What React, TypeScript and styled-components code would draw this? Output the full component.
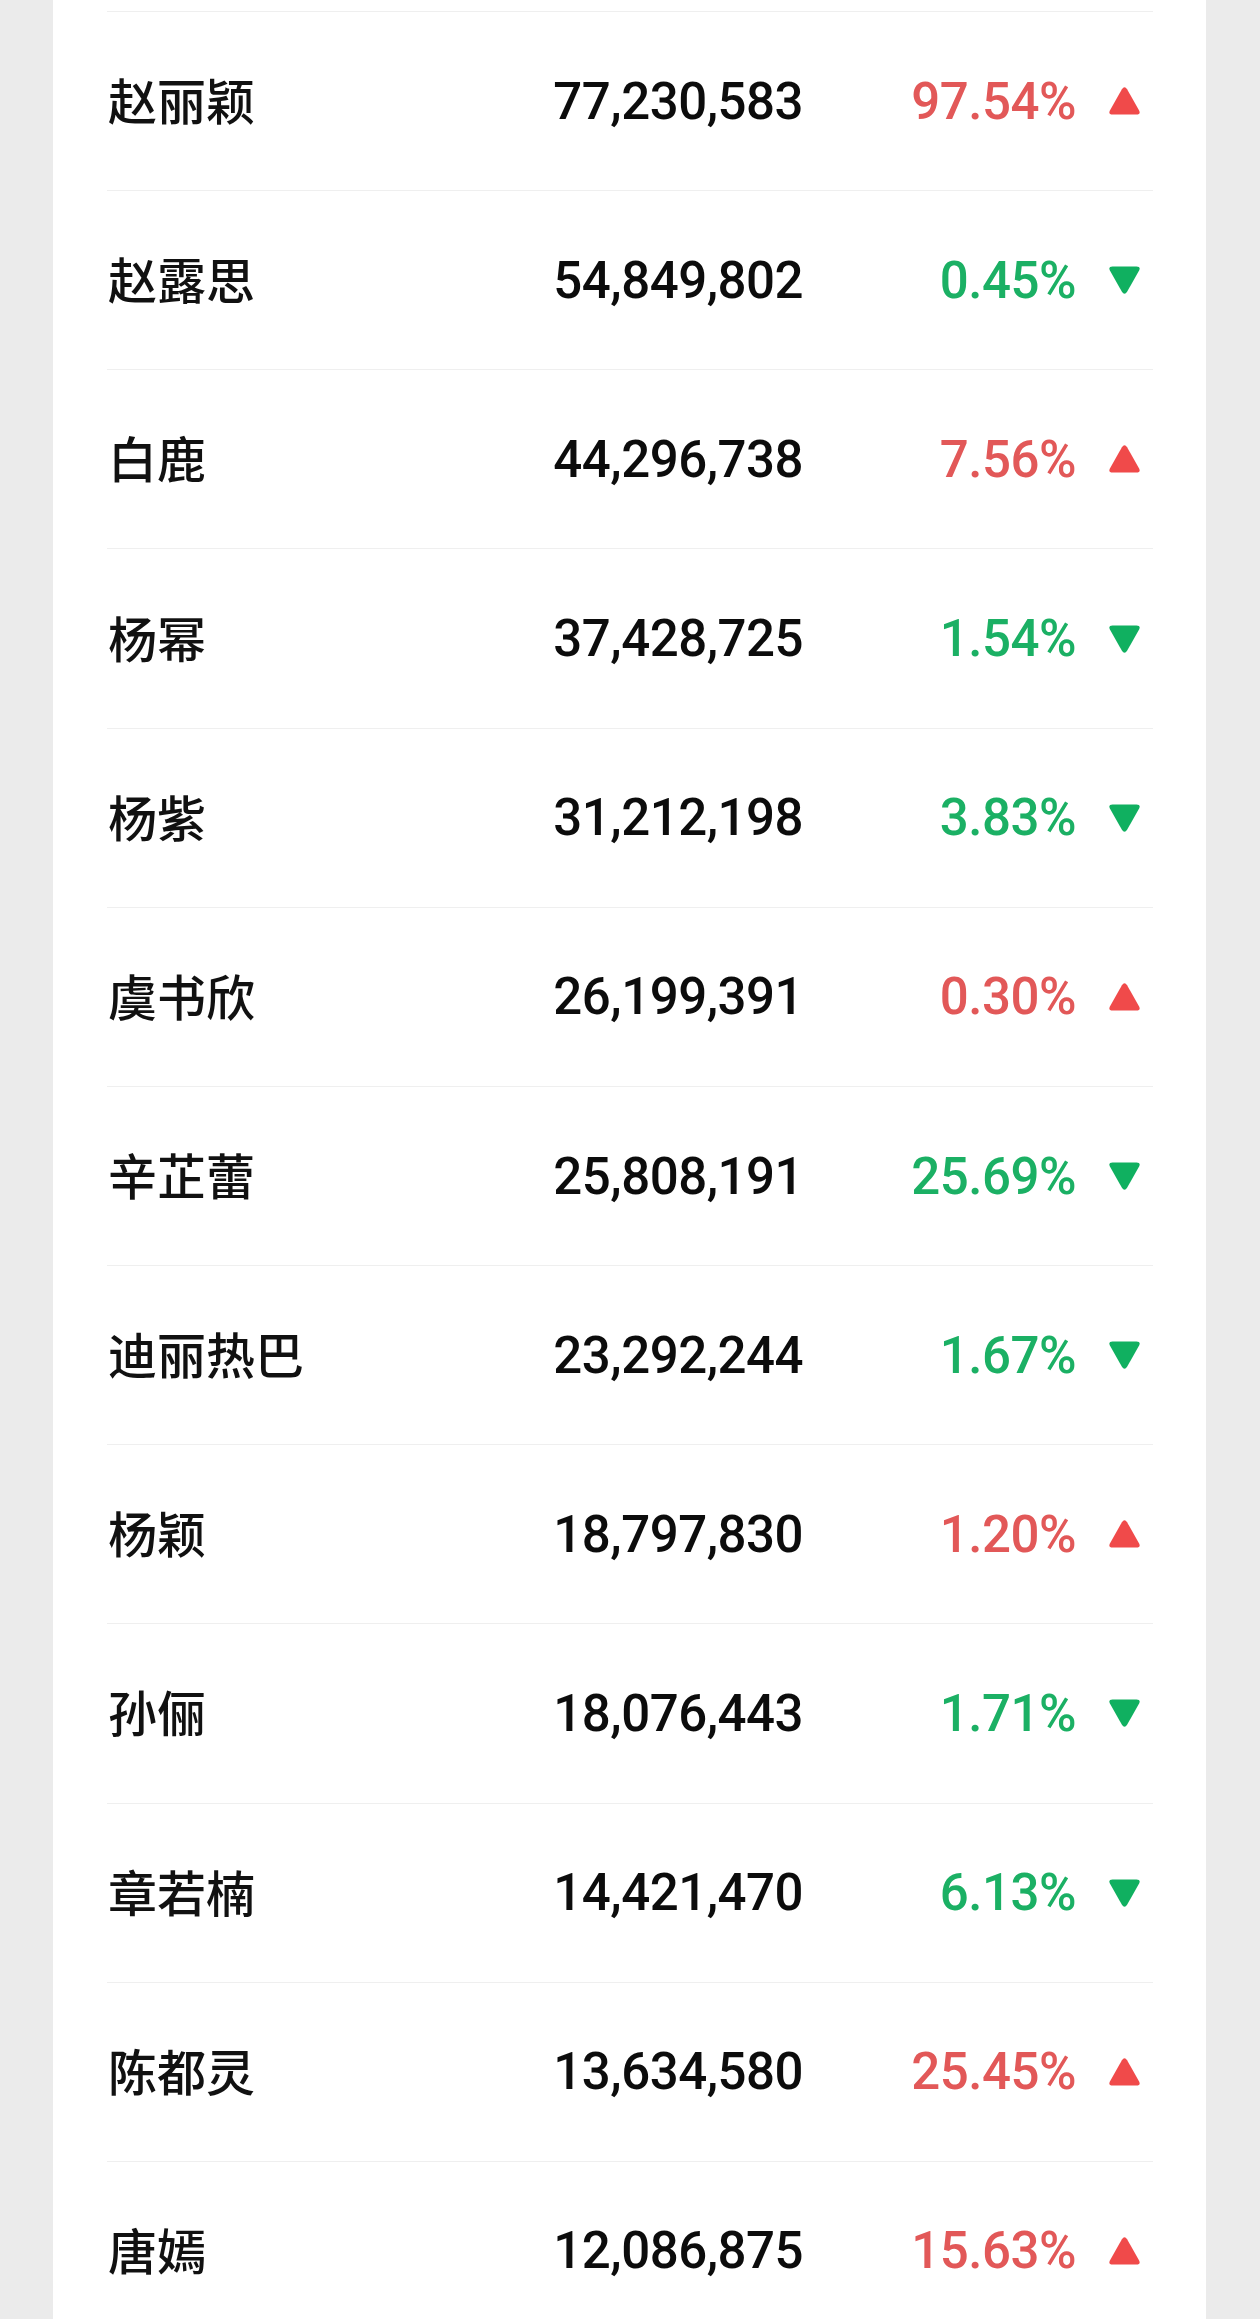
import React from "react";
import styled, { createGlobalStyle } from "styled-components";

const GlobalStyle = createGlobalStyle`
  html, body {
    margin: 0;
    padding: 0;
    background: #ebebeb;
  }
  body {
    font-family: Roboto, "Noto Sans CJK SC", sans-serif;
    color: #111;
  }
`;

const Page = styled.div`
  width: 1260px;
  height: 2319px;
  overflow: hidden;
  background: #ebebeb;
  display: flex;
  justify-content: flex-start;
  padding-left: 53px;
  box-sizing: border-box;
`;

const Card = styled.section`
  width: 1153px;
  background: #ffffff;
  padding: 11px 53px 0 54px;
  box-sizing: border-box;
`;

const Row = styled.div`
  height: 179.17px;
  box-sizing: border-box;
  border-top: 1.5px solid #efefef;
  display: grid;
  grid-template-columns: 1fr 276px 273px 65px;
  align-items: center;
  padding-right: 12px;
`;

const Name = styled.div`
  font-family: "Noto Sans CJK SC", sans-serif;
  font-size: 49px;
  font-weight: 500;
  color: #111;
  padding-left: 1px;
  line-height: 1;
  margin-top: -5px;
`;

const Value = styled.div`
  font-family: Roboto, "Liberation Sans", sans-serif;
  font-size: 51px;
  font-weight: 500;
  color: #0c0c0c;
  text-align: right;
  letter-spacing: -0.5px;
  line-height: 1;
`;

const Change = styled.div<{ $up: boolean }>`
  font-family: Roboto, "Liberation Sans", sans-serif;
  font-size: 51px;
  font-weight: 500;
  color: ${(p) => (p.$up ? "#e25858" : "#1bb064")};
  text-align: right;
  letter-spacing: -0.5px;
  line-height: 1;
`;

const Trend = styled.div`
  display: flex;
  justify-content: flex-end;
  align-items: center;
  svg {
    display: block;
  }
`;

function Arrow({ up }: { up: boolean }) {
  const fill = up ? "#f04a4a" : "#10b060";
  return (
    <svg width="33" height="30" viewBox="0 0 32 30">
      {up ? (
        <path
          d="M13.4 3.2 Q16 -0.8 18.6 3.2 L30.6 24.6 Q32.4 28.6 28 28.6 L4 28.6 Q-0.4 28.6 1.4 24.6 Z"
          fill={fill}
        />
      ) : (
        <path
          d="M13.4 26.8 Q16 30.8 18.6 26.8 L30.6 5.4 Q32.4 1.4 28 1.4 L4 1.4 Q-0.4 1.4 1.4 5.4 Z"
          fill={fill}
        />
      )}
    </svg>
  );
}

const rows = [
  { name: "赵丽颖", value: "77,230,583", change: "97.54%", up: true },
  { name: "赵露思", value: "54,849,802", change: "0.45%", up: false },
  { name: "白鹿", value: "44,296,738", change: "7.56%", up: true },
  { name: "杨幂", value: "37,428,725", change: "1.54%", up: false },
  { name: "杨紫", value: "31,212,198", change: "3.83%", up: false },
  { name: "虞书欣", value: "26,199,391", change: "0.30%", up: true },
  { name: "辛芷蕾", value: "25,808,191", change: "25.69%", up: false },
  { name: "迪丽热巴", value: "23,292,244", change: "1.67%", up: false },
  { name: "杨颖", value: "18,797,830", change: "1.20%", up: true },
  { name: "孙俪", value: "18,076,443", change: "1.71%", up: false },
  { name: "章若楠", value: "14,421,470", change: "6.13%", up: false },
  { name: "陈都灵", value: "13,634,580", change: "25.45%", up: true },
  { name: "唐嫣", value: "12,086,875", change: "15.63%", up: true },
];

export default function App() {
  return (
    <>
      <GlobalStyle />
      <Page>
        <Card>
          {rows.map((r) => (
            <Row key={r.name}>
              <Name>{r.name}</Name>
              <Value>{r.value}</Value>
              <Change $up={r.up}>{r.change}</Change>
              <Trend>
                <Arrow up={r.up} />
              </Trend>
            </Row>
          ))}
        </Card>
      </Page>
    </>
  );
}
